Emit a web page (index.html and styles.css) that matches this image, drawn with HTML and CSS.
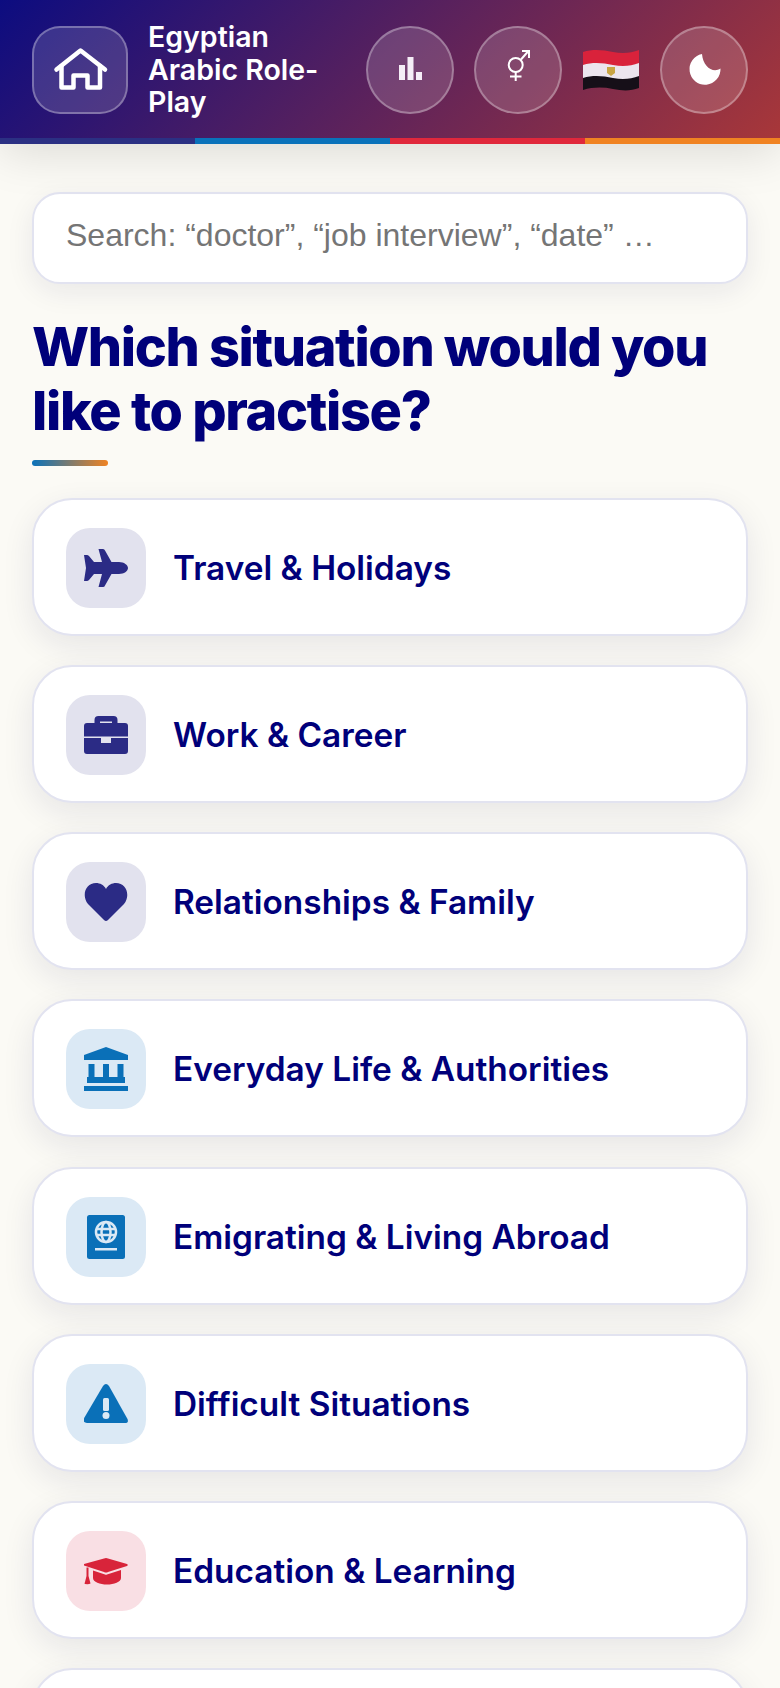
FILE: index.html
```html
<!DOCTYPE html>
<html lang="en">
<head>
    <meta charset="UTF-8">
    <title>Egyptian Arabic Role-Play</title>
    <link rel="stylesheet" href="styles.css">
</head>
<body>
    <header class="topbar">
        <div class="topbar-row">
            <a class="home-btn" href="javascript:;">
                <svg width="60" height="60" viewBox="0 0 60 60" fill="none" stroke="#fff" stroke-width="4.500" stroke-linecap="round" stroke-linejoin="round"><path d="M6.500 29.500 30.500 10.500 55 29.500"/><path d="M11.500 26V47.500H23.500V35.500H37.500V47.500H50V26"/></svg>
            </a>
            <div class="app-title">Egyptian Arabic Role-Play</div>
            <a class="round-btn" href="javascript:;">
                <svg width="44" height="44" viewBox="0 0 44 44" fill="#f5eef7"><rect x="11" y="17" width="6" height="15"/><rect x="19.500" y="9" width="6" height="23"/><rect x="28" y="24" width="6" height="8"/></svg>
            </a>
            <a class="round-btn" href="javascript:;">
                <svg width="44" height="44" viewBox="0 0 44 44" fill="none" stroke="#fff" stroke-width="2"><circle cx="19.700" cy="17" r="7"/><path d="M25 11.500 32 3.500M26 3H33V10M19.700 24V33M14 28.500H25.500"/></svg>
            </a>
            <svg class="flag" width="56" height="42" viewBox="0 0 56 42">
                <path fill="#d9223b" d="M0 3C10 0 20 1 30 3S48 4 56 1V15C48 18 40 19 30 17S10 14 0 17Z"/>
                <path fill="#ece5ee" d="M0 16C10 13 20 14 30 16S48 17 56 14V28C48 31 40 32 30 30S10 27 0 30Z"/>
                <path fill="#160f18" d="M0 29C10 26 20 27 30 29S48 30 56 27V39C48 42 40 42 30 40S10 38 0 41Z"/>
                <path fill="#c9a544" d="M24 18H32V24L28 27 24 24Z"/>
            </svg>
            <a class="round-btn" href="javascript:;">
                <svg width="44" height="44" viewBox="0 0 44 44" fill="#fff"><path d="M20 6A15.500 15.500 0 1 0 38.500 20.500C31 25.500 21 19 20 6Z"/></svg>
            </a>
        </div>
        <div class="stripe">
            <span class="stripe-navy"></span>
            <span class="stripe-blue"></span>
            <span class="stripe-red"></span>
            <span class="stripe-orange"></span>
        </div>
    </header>

    <main class="content">
        <input class="search" type="text" placeholder="Search: “doctor”, “job interview”, “date” …">
        <h1 class="heading">Which situation would you like to practise?</h1>
        <div class="heading-line"></div>

        <div class="cards">
            <a class="card" href="javascript:;">
                <span class="tile tile-navy">
                    <svg width="44" height="44" viewBox="0 0 44 44" fill="currentColor"><path d="M44 22C44 25 40 28 35 28H27.500L21 39.500Q20.500 41 19 41H14.500L18 28H10L5 34Q4 35 3 35H0L2 22 0 9H3Q4 9 5 10L10 16H18L14.500 3H19Q20.500 3 21 4.500L27.500 16H35C40 16 44 19 44 22Z"/></svg>
                </span>
                <span class="card-label">Travel &amp; Holidays</span>
            </a>
            <a class="card" href="javascript:;">
                <span class="tile tile-navy">
                    <svg width="44" height="44" viewBox="0 0 44 44" fill="currentColor"><path d="M10.500 11V7Q10.500 3 14.500 3H29.500Q33.500 3 33.500 7V11H28V8.500H16V11Z"/><path d="M3 10H41Q44 10 44 13V23.500H0V13Q0 10 3 10Z"/><path d="M0 25H17V30H27V25H44V38Q44 41 41 41H3Q0 41 0 38Z"/></svg>
                </span>
                <span class="card-label">Work &amp; Career</span>
            </a>
            <a class="card" href="javascript:;">
                <span class="tile tile-navy">
                    <svg width="44" height="44" viewBox="0 0 44 44" fill="currentColor"><path d="M22 41Q21 41 20 40L4 24C-3 15 2 3 12 3 16 3 20 5 22 9 24 5 28 3 32 3 42 3 47 15 40 24L24 40Q23 41 22 41Z"/></svg>
                </span>
                <span class="card-label">Relationships &amp; Family</span>
            </a>
            <a class="card" href="javascript:;">
                <span class="tile tile-blue">
                    <svg width="44" height="44" viewBox="0 0 44 44" fill="currentColor"><path d="M22 0 44 8V13H0V8Z"/><rect x="4.500" y="17" width="6" height="14"/><rect x="19" y="17" width="6" height="14"/><rect x="33.500" y="17" width="6" height="14"/><rect x="3" y="30" width="38" height="6"/><rect x="0" y="39" width="44" height="5"/></svg>
                </span>
                <span class="card-label">Everyday Life &amp; Authorities</span>
            </a>
            <a class="card" href="javascript:;">
                <span class="tile tile-blue">
                    <svg width="44" height="44" viewBox="0 0 44 44"><rect x="3" y="0" width="38" height="44" rx="2.500" fill="currentColor"/><g fill="none" stroke="#dbe9f5" stroke-width="2.500"><circle cx="22" cy="17" r="10"/><ellipse cx="22" cy="17" rx="4.500" ry="10"/><path d="M12.500 14H31.500M12.500 20H31.500"/></g><rect x="11" y="33" width="22" height="2.500" fill="#dbe9f5"/></svg>
                </span>
                <span class="card-label">Emigrating &amp; Living Abroad</span>
            </a>
            <a class="card" href="javascript:;">
                <span class="tile tile-blue">
                    <svg width="44" height="44" viewBox="0 0 44 44"><path fill="currentColor" d="M19 4Q22 0 25 4L43.500 37Q45 41 41 41H3Q-1 41-.5 37Z"/><rect x="19" y="16" width="6" height="13" rx="1.500" fill="#dbe9f5"/><circle cx="22" cy="33.500" r="3.500" fill="#dbe9f5"/></svg>
                </span>
                <span class="card-label">Difficult Situations</span>
            </a>
            <a class="card" href="javascript:;">
                <span class="tile tile-red">
                    <svg width="44" height="44" viewBox="0 0 44 44" fill="currentColor"><path d="M20 9.500Q22 8.500 24 9.500L43 15Q44.500 16 43 17L24 23Q22 24 20 23L0 16.500Q-1 16 0 15Z"/><path d="M9 21.500 21 25.500Q22 26 23 25.500L37 21V29C37 33 30 35.500 23 35.500S9 33 9 29Z"/><path d="M2.500 18.500H4.500V27L6.500 34.500Q5 35.500 1 35Q0 35 1 33L2.500 27Z"/></svg>
                </span>
                <span class="card-label">Education &amp; Learning</span>
            </a>
            <a class="card" href="javascript:;"></a>
        </div>
    </main>
</body>
</html>
```

FILE: styles.css
```css
*{
    margin: 0;
    padding: 0;
    box-sizing: border-box;
}
html,body{
    height: 1688px;
    overflow: hidden;
}
body{
    background: #fbfaf5;
    font-family: "Inter", "Liberation Sans", sans-serif;
}
a{
    color: inherit;
    text-decoration: none;
}
.topbar{
    position: relative;
    z-index: 2;
    box-shadow: 0 8px 48px rgba(0,0,0,.13);
}
.topbar-row{
    display: flex;
    align-items: center;
    gap: 20px;
    height: 138px;
    padding: 26px 32px 24px;
    background: linear-gradient(135deg, #0c0c80 0%, #a83739 100%);
}
.home-btn,.round-btn{
    display: flex;
    flex: none;
    align-items: center;
    justify-content: center;
    height: 88px;
    background: rgba(255,255,255,.15);
    border: 2px solid rgba(255,255,255,.3);
}
.home-btn{
    width: 96px;
    border-radius: 28px;
}
.round-btn{
    width: 88px;
    border-radius: 50%;
}
.app-title{
    flex: 1;
    min-width: 0;
    color: #fff;
    font-size: 28.5px;
    font-weight: 600;
    line-height: 32.5px;
}
.flag{
    flex: none;
    margin: 0 1px;
}
.stripe{
    display: flex;
    height: 6px;
}
.stripe span{
    flex: 1;
}
.stripe-navy{
    background: #2b3083;
}
.stripe-blue{
    background: #0a72ba;
}
.stripe-red{
    background: #e0283c;
}
.stripe-orange{
    background: #f08322;
}
.content{
    padding: 48px 32px 0;
}
.search{
    display: block;
    width: 100%;
    height: 92px;
    padding: 0 32px 5px;
    background: #fff;
    border: 2px solid #e2e3f0;
    border-radius: 28px;
    box-shadow: 0 8px 28px rgba(20,20,80,.08);
    font-family: "Liberation Sans", sans-serif;
    font-size: 32px;
    outline: none;
}
.search::placeholder{
    color: #757575;
    opacity: 1;
}
.heading{
    margin-top: 31px;
    color: #00007a;
    font-size: 54px;
    font-weight: 800;
    line-height: 63.5px;
    letter-spacing: -1.35px;
}
.heading-line{
    width: 76px;
    height: 6px;
    margin-top: 18px;
    background: linear-gradient(90deg, #0a72ba, #f08322);
    border-radius: 3px;
}
.cards{
    display: flex;
    flex-direction: column;
    gap: 29.17px;
    margin-top: 32px;
}
.card{
    display: flex;
    flex: none;
    align-items: center;
    gap: 27px;
    height: 138px;
    padding: 28px 32px 26px;
    background: #fff;
    border: 2px solid #e2e3f0;
    border-radius: 40px;
    box-shadow: 0 10px 32px rgba(20,20,80,.09);
}
.tile{
    display: flex;
    flex: none;
    align-items: center;
    justify-content: center;
    width: 80px;
    height: 80px;
    border-radius: 24px;
}
.tile-navy{
    color: #2b2b85;
    background: #e2e2ee;
}
.tile-blue{
    color: #0a70b8;
    background: #dbe9f5;
}
.tile-red{
    color: #d8243a;
    background: #f9dfe4;
}
.card-label{
    color: #00007a;
    font-size: 33.4px;
    font-weight: 600;
}
```
